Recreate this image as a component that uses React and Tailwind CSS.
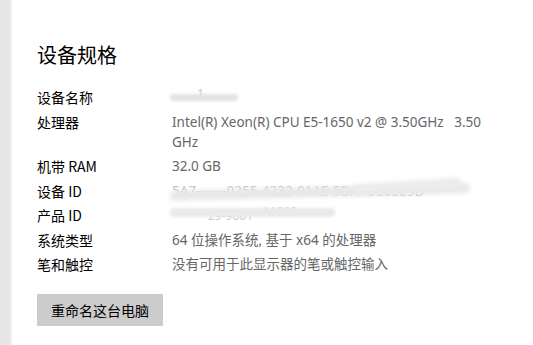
import React from "react";

const rows = [
  { label: "设备名称", kind: "name" },
  { label: "处理器", value: "Intel(R) Xeon(R) CPU E5-1650 v2 @ 3.50GHz   3.50 GHz" },
  { label: "机带 RAM", value: "32.0 GB" },
  { label: "设备 ID", kind: "devid" },
  { label: "产品 ID", kind: "prodid" },
  { label: "系统类型", value: "64 位操作系统, 基于 x64 的处理器" },
  { label: "笔和触控", value: "没有可用于此显示器的笔或触控输入" },
];

function Value({ row }) {
  if (row.kind === "name") {
    return (
      <div className="relative h-[20px] w-[70px]">
        <span className="absolute left-[12px] top-[-4px] text-[#cccccc] text-[13px] tracking-[3px] whitespace-nowrap">.  1.,  .</span>
        <div className="absolute left-[-2px] top-[7px] h-[7px] w-[68px] rounded-full bg-[#e2e2e2] blur-[1.5px]" />
      </div>
    );
  }
  if (row.kind === "devid") {
    return (
      <div className="relative h-[20px] w-[290px] overflow-visible">
        <span className="text-[#c4c4c4] whitespace-nowrap">5A7-------0255-4232-01AE-5DA--0C0LC9D</span>
        <div className="absolute left-[-2px] top-[6px] h-[10px] w-[300px] rounded-full bg-[#e8e8e8] blur-[2px] rotate-[-1.5deg]" />
        <div className="absolute left-[180px] top-[0px] h-[10px] w-[110px] rounded-full bg-[#ececec] blur-[2px] rotate-[-4deg]" />
      </div>
    );
  }
  if (row.kind === "prodid") {
    return (
      <div className="relative h-[20px] w-[170px]">
        <span className="absolute left-[90px] top-[-3px] text-[#d2d2d2] whitespace-nowrap text-[12px]">A1000</span>
        <span className="absolute left-[36px] top-[1px] text-[#cacaca] whitespace-nowrap text-[12px]">29-9001</span>
        <div className="absolute left-[-2px] top-[3px] h-[9px] w-[165px] rounded-sm bg-[#e9e9e9] blur-[1.5px]" />
      </div>
    );
  }
  return <div className="w-[330px] whitespace-pre-wrap">{row.value}</div>;
}

export default function App() {
  return (
    <div className="flex h-[345px] w-[533px] overflow-hidden bg-white" style={{ fontFamily: '"Noto Sans", "Noto Sans CJK SC", sans-serif' }}>
      <div className="h-full w-[12px] shrink-0 bg-[#e6e6e6] border-r-[2px] border-[#efefef]" />
      <div className="flex flex-col pl-[25px] pt-[41px]">
        <h1 className="text-[20px] leading-[28px] text-[#000]" style={{ fontFamily: '"Noto Sans CJK SC", sans-serif' }}>设备规格</h1>
        <div className="mt-[18px] flex flex-col gap-[4.5px] text-[14px] leading-[20px]">
          {rows.map((r) => (
            <div key={r.label} className="flex">
              <div className="w-[135px] shrink-0 text-[#000]" style={{ fontFamily: '"Noto Sans CJK SC", sans-serif' }}>{r.label}</div>
              <div className="text-[13.5px] text-[#666666]">
                <Value row={r} />
              </div>
            </div>
          ))}
        </div>
        <button className="mt-[20px] h-[32px] w-[126px] bg-[#cccccc] text-[14px] text-[#000]" style={{ fontFamily: '"Noto Sans CJK SC", sans-serif' }}>
          重命名这台电脑
        </button>
      </div>
    </div>
  );
}
